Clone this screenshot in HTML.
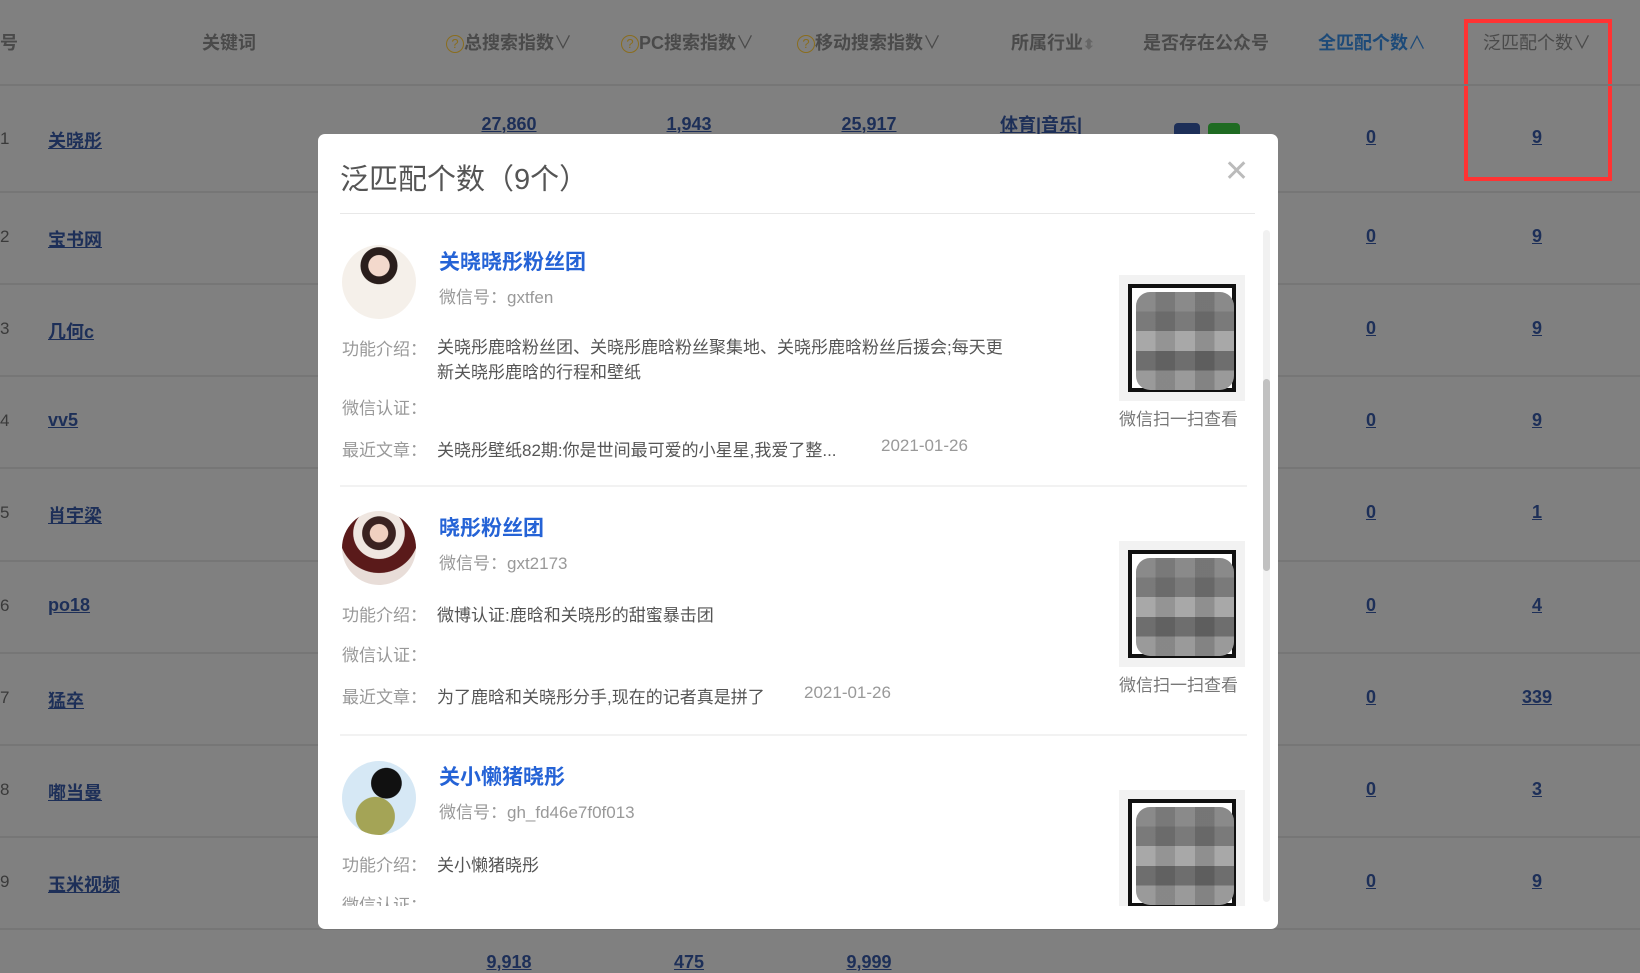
<!DOCTYPE html>
<html><head><meta charset="utf-8"><style>
*{margin:0;padding:0;box-sizing:border-box}
body{width:1640px;height:957px;overflow:hidden;position:relative;background:#808080;font-family:"Liberation Sans","Noto Sans CJK SC",sans-serif}
.a{position:absolute;white-space:nowrap}
.h{font-size:18px;font-weight:bold;color:#4a4a4a;top:29px}
.q{display:inline-block;width:18px;height:18px;border:1.5px solid #8a6d1e;border-radius:50%;color:#8a6d1e;font-size:13px;line-height:15px;text-align:center;vertical-align:1px;font-weight:normal}
.ln{position:absolute;left:0;width:1640px;height:2px;background:#767676}
.lk{color:#1d2f58;text-decoration:underline;font-size:18px;font-weight:bold;transform:translateX(-50%)}
.kw{color:#1d2f58;text-decoration:underline;font-size:18px;font-weight:bold;left:48px}
.idx{color:#3a3a3a;font-size:17px;left:0}
.modal{position:absolute;left:318px;top:134px;width:960px;height:795px;background:#fff;border-radius:7px;overflow:hidden}
.m{position:absolute;white-space:nowrap}
.lab{color:#999;font-size:17px}
.txt{color:#555;font-size:17px}
.nm{color:#2563d6;font-size:21px;font-weight:bold}
.qr{position:absolute;width:126px;height:126px;background:#f2f2f2;padding:9px}
.qr div{width:100%;height:100%;background:#fff;border:4px solid #111;position:relative}
.qr span{position:absolute;left:4px;top:4px;right:-2px;bottom:-2px;border-radius:14px;background:
linear-gradient(90deg,rgba(0,0,0,.0) 0 20%,rgba(0,0,0,.12) 20% 40%,rgba(0,0,0,0) 40% 60%,rgba(0,0,0,.15) 60% 80%,rgba(0,0,0,0) 80%),
linear-gradient(#8a8a8a 0 20%,#7a7a7a 20% 40%,#a8a8a8 40% 60%,#6e6e6e 60% 80%,#9a9a9a 80%)}
.av{position:absolute;width:74px;height:74px;border-radius:50%;overflow:hidden}
</style></head><body>
<div class="a h" style="left:0">号</div>
<div class="a h" style="left:202px">关键词</div>
<div class="a h" style="left:446px"><span class="q">?</span>总搜索指数<span style="font-weight:normal">∨</span></div>
<div class="a h" style="left:621px"><span class="q">?</span>PC搜索指数<span style="font-weight:normal">∨</span></div>
<div class="a h" style="left:797px"><span class="q">?</span>移动搜索指数<span style="font-weight:normal">∨</span></div>
<div class="a h" style="left:1011px">所属行业<span style="color:#666;font-size:14px">⬍</span></div>
<div class="a h" style="left:1143px">是否存在公众号</div>
<div class="a h" style="left:1318px;color:#1d4a78">全匹配个数<span style="font-weight:normal">∧</span></div>
<div class="a h" style="left:1483px;font-weight:normal;color:#4a4a4a">泛匹配个数∨</div>
<div style="position:absolute;left:1464px;top:19px;width:148px;height:162px;border:4px solid #f33"></div>
<div class="ln" style="top:84px"></div>
<div class="ln" style="top:191px"></div><div class="ln" style="top:283px"></div><div class="ln" style="top:375px"></div><div class="ln" style="top:467px"></div><div class="ln" style="top:560px"></div><div class="ln" style="top:652px"></div><div class="ln" style="top:744px"></div><div class="ln" style="top:836px"></div><div class="ln" style="top:928px"></div>
<div class="a lk" style="left:509px;top:114px">27,860</div>
<div class="a lk" style="left:689px;top:114px">1,943</div>
<div class="a lk" style="left:869px;top:114px">25,917</div>
<div class="a lk" style="left:1041px;top:111px">体育|音乐|</div>
<div class="a" style="left:1174px;top:123px;width:26px;height:20px;background:#1d2f58;border-radius:4px"></div>
<div class="a" style="left:1208px;top:123px;width:32px;height:20px;background:#1f6b22;border-radius:4px"></div>
<div class="a idx" style="top:129px">1</div><div class="a kw" style="top:127px">关晓彤</div>
<div class="a idx" style="top:227px">2</div><div class="a kw" style="top:226px">宝书网</div>
<div class="a idx" style="top:319px">3</div><div class="a kw" style="top:318px">几何c</div>
<div class="a idx" style="top:411px">4</div><div class="a kw" style="top:410px">vv5</div>
<div class="a idx" style="top:503px">5</div><div class="a kw" style="top:502px">肖宇梁</div>
<div class="a idx" style="top:596px">6</div><div class="a kw" style="top:595px">po18</div>
<div class="a idx" style="top:688px">7</div><div class="a kw" style="top:687px">猛卒</div>
<div class="a idx" style="top:780px">8</div><div class="a kw" style="top:779px">嘟当曼</div>
<div class="a idx" style="top:872px">9</div><div class="a kw" style="top:871px">玉米视频</div>
<div class="a lk" style="left:1371px;top:127px">0</div><div class="a lk" style="left:1537px;top:127px">9</div>
<div class="a lk" style="left:1371px;top:226px">0</div><div class="a lk" style="left:1537px;top:226px">9</div>
<div class="a lk" style="left:1371px;top:318px">0</div><div class="a lk" style="left:1537px;top:318px">9</div>
<div class="a lk" style="left:1371px;top:410px">0</div><div class="a lk" style="left:1537px;top:410px">9</div>
<div class="a lk" style="left:1371px;top:502px">0</div><div class="a lk" style="left:1537px;top:502px">1</div>
<div class="a lk" style="left:1371px;top:595px">0</div><div class="a lk" style="left:1537px;top:595px">4</div>
<div class="a lk" style="left:1371px;top:687px">0</div><div class="a lk" style="left:1537px;top:687px">339</div>
<div class="a lk" style="left:1371px;top:779px">0</div><div class="a lk" style="left:1537px;top:779px">3</div>
<div class="a lk" style="left:1371px;top:871px">0</div><div class="a lk" style="left:1537px;top:871px">9</div>
<div class="a lk" style="left:509px;top:952px">9,918</div><div class="a lk" style="left:689px;top:952px">475</div><div class="a lk" style="left:869px;top:952px">9,999</div>

<div class="modal">
 <div class="m" style="left:22px;top:22px;font-size:29px;color:#555">泛匹配个数（9个）</div>
 <div class="m" style="left:906px;top:20px;font-size:30px;color:#bbb;font-weight:300">✕</div>
 <div class="m" style="left:22px;top:79px;width:915px;height:1px;background:#e8e8e8"></div>
 <div class="m" style="left:945px;top:96px;width:7px;height:672px;background:#f1f1f1;border-radius:4px"></div>
 <div class="m" style="left:945px;top:245px;width:7px;height:192px;background:#c1c1c1;border-radius:4px"></div>
 <div class="m" style="left:0;top:80px;width:940px;height:692px;overflow:hidden">
  <div class="av" style="left:24px;top:31px;background:radial-gradient(circle at 50% 28%,#f3d9cc 0 16%,#2a1e1c 17% 28%,#f5f0ea 29%)"></div>
  <div class="m nm" style="left:121px;top:32px">关晓晓彤粉丝团</div>
  <div class="m lab" style="left:121px;top:69px">微信号：gxtfen</div>
  <div class="m lab" style="left:24px;top:121px">功能介绍：</div>
  <div class="m txt" style="left:119px;top:121px;line-height:25px">关晓彤鹿晗粉丝团、关晓彤鹿晗粉丝聚集地、关晓彤鹿晗粉丝后援会;每天更<br>新关晓彤鹿晗的行程和壁纸</div>
  <div class="m lab" style="left:24px;top:180px">微信认证：</div>
  <div class="m lab" style="left:24px;top:222px">最近文章：</div>
  <div class="m txt" style="left:119px;top:222px">关晓彤壁纸82期:你是世间最可爱的小星星,我爱了整...</div>
  <div class="m lab" style="left:563px;top:222px">2021-01-26</div>
  <div class="qr" style="left:801px;top:61px"><div><span></span></div></div>
  <div class="m lab" style="left:801px;top:191px;color:#777">微信扫一扫查看</div>
  <div class="m" style="left:22px;top:271px;width:907px;height:2px;background:#f2f2f2"></div>
  <div class="av" style="left:24px;top:297px;background:radial-gradient(circle at 50% 30%,#f0d0c0 0 14%,#3a2220 15% 26%,#efe6e0 27% 40%,#5a1a1a 41% 62%,#e8ddd8 63%)"></div>
  <div class="m nm" style="left:121px;top:298px">晓彤粉丝团</div>
  <div class="m lab" style="left:121px;top:335px">微信号：gxt2173</div>
  <div class="m lab" style="left:24px;top:387px">功能介绍：</div>
  <div class="m txt" style="left:119px;top:387px">微博认证:鹿晗和关晓彤的甜蜜暴击团</div>
  <div class="m lab" style="left:24px;top:427px">微信认证：</div>
  <div class="m lab" style="left:24px;top:469px">最近文章：</div>
  <div class="m txt" style="left:119px;top:469px">为了鹿晗和关晓彤分手,现在的记者真是拼了</div>
  <div class="m lab" style="left:486px;top:469px">2021-01-26</div>
  <div class="qr" style="left:801px;top:327px"><div><span></span></div></div>
  <div class="m lab" style="left:801px;top:457px;color:#777">微信扫一扫查看</div>
  <div class="m" style="left:22px;top:520px;width:907px;height:2px;background:#f2f2f2"></div>
  <div class="av" style="left:24px;top:547px;background:radial-gradient(circle at 60% 30%,#111 0 22%,transparent 23%),radial-gradient(circle at 45% 75%,#a4a456 0 28%,transparent 29%),#d6e8f5"></div>
  <div class="m nm" style="left:121px;top:547px">关小懒猪晓彤</div>
  <div class="m lab" style="left:121px;top:584px">微信号：gh_fd46e7f0f013</div>
  <div class="m lab" style="left:24px;top:637px">功能介绍：</div>
  <div class="m txt" style="left:119px;top:637px">关小懒猪晓彤</div>
  <div class="m lab" style="left:24px;top:677px">微信认证：</div>
  <div class="qr" style="left:801px;top:576px"><div><span></span></div></div>
 </div>
</div>
</body></html>
